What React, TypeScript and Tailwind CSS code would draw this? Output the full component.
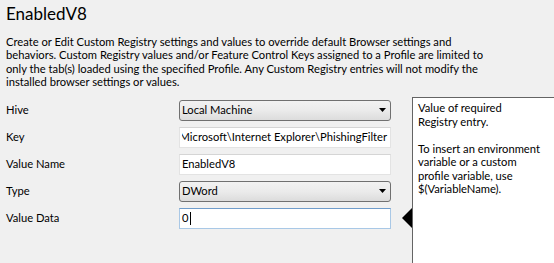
import React from "react";

const font = { fontFamily: "Lato, 'Liberation Sans', sans-serif" };

function Combo({ value }: { value: string }) {
  return (
    <div className="relative flex h-[21px] w-[212px] items-center rounded-[3px] border border-[#707070] bg-gradient-to-b from-[#f2f2f2] via-[#ebebeb] to-[#dcdcdc] pl-[2px] text-[11.2px] text-black">
      <span>{value}</span>
      <svg className="absolute right-[4px] top-[7px]" width="7" height="4" viewBox="0 0 7 4">
        <path d="M0 0H7L3.5 4Z" fill="#000" />
      </svg>
    </div>
  );
}

function TextBox({ children, focused }: { children: React.ReactNode; focused?: boolean }) {
  return (
    <div
      className={
        "flex h-[21px] w-[212px] items-center overflow-hidden border bg-white px-[2px] text-[11.2px] text-black " +
        (focused
          ? "border-[#a9c8e6] border-t-[#6f9ccb]"
          : "border-[#e3e3e3] border-t-[#d5d5d5]")
      }
    >
      {children}
    </div>
  );
}

export default function App() {
  const rows: { label: string; field: React.ReactNode }[] = [
    { label: "Hive", field: <Combo value="Local Machine" /> },
    {
      label: "Key",
      field: (
        <TextBox>
          <div className="flex w-full justify-end overflow-hidden whitespace-nowrap pr-[1px]">
            <span>SOFTWARE\Microsoft\Internet Explorer\PhishingFilter</span>
          </div>
        </TextBox>
      ),
    },
    { label: "Value Name", field: <TextBox>EnabledV8</TextBox> },
    { label: "Type", field: <Combo value="DWord" /> },
    {
      label: "Value Data",
      field: (
        <TextBox focused>
          <span>0</span>
          <span className="ml-[1px] inline-block h-[13px] w-[1px] bg-black" />
        </TextBox>
      ),
    },
  ];

  return (
    <div className="h-[263px] w-[554px] overflow-hidden bg-[#f0f0f0] text-black" style={font}>
      <div className="px-[6px] pt-[3px] text-[17px] leading-[22px]">EnabledV8</div>
      <div className="mt-[10px] px-[6px] text-[11.2px] leading-[13.3px]">
        Create or Edit Custom Registry settings and values to override default Browser settings and
        <br />
        behaviors. Custom Registry values and/or Feature Control Keys assigned to a Profile are limited to
        <br />
        only the tab(s) loaded using the specified Profile. Any Custom Registry entries will not modify the
        <br />
        installed browser settings or values.
      </div>
      <div className="mt-[9px] flex items-start">
        <div className="mt-[3px] flex flex-col gap-[6px] pl-[6px]">
          {rows.map((r) => (
            <div key={r.label} className="flex items-center">
              <div className="w-[173px] text-[11.2px]">{r.label}</div>
              {r.field}
            </div>
          ))}
        </div>
        <div className="relative ml-[21px] h-[200px] flex-1 border-l border-t border-[#646464] bg-white pl-[5px] pt-[3px] text-[11.2px] leading-[13.5px]">
          <svg className="absolute left-[-11px] top-[110px]" width="10" height="20" viewBox="0 0 10 20">
            <path d="M10 0V20L0 10Z" fill="#000" />
          </svg>
          <div>Value of required</div>
          <div>Registry entry.</div>
          <div className="h-[13.5px]" />
          <div>To insert an environment</div>
          <div>variable or a custom</div>
          <div>profile variable, use</div>
          <div>$(VariableName).</div>
        </div>
      </div>
    </div>
  );
}
